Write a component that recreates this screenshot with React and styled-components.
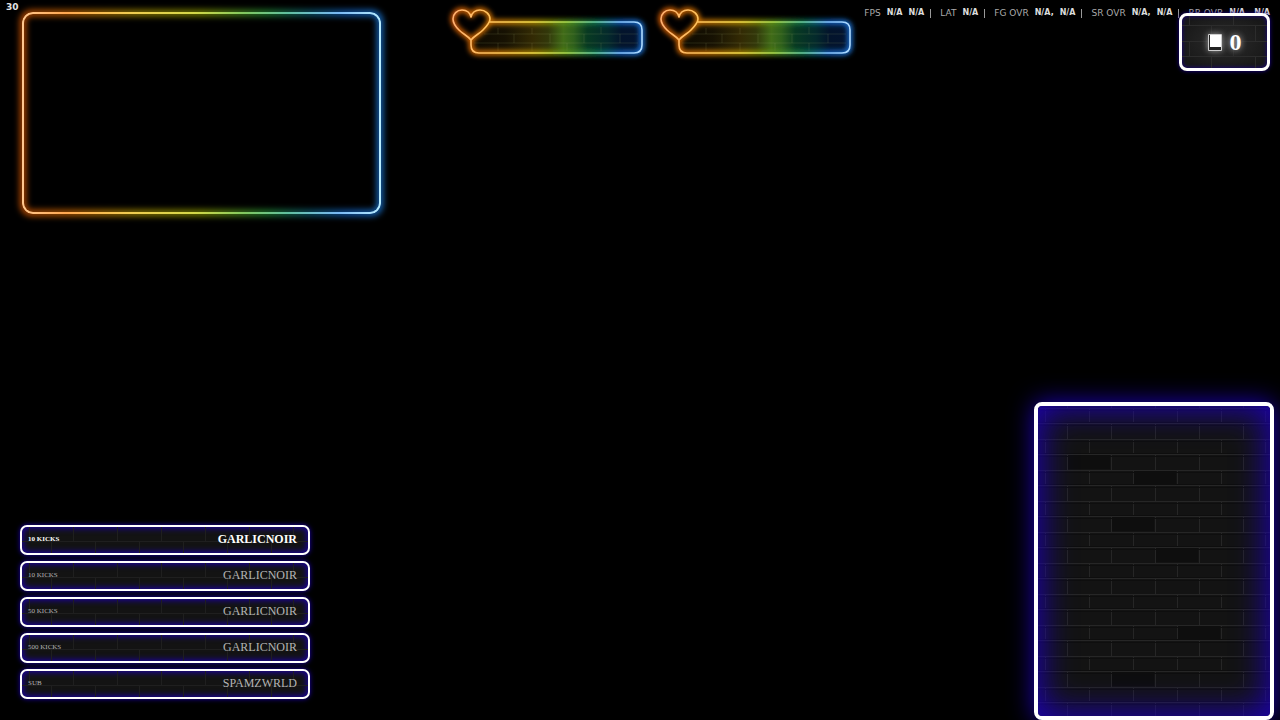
import { useId } from "react";
import styled, { createGlobalStyle, css } from "styled-components";

const stats = [
  { label: "FPS", values: ["N/A", "N/A"] },
  { label: "LAT", values: ["N/A"] },
  { label: "FG OVR", values: ["N/A,", "N/A"] },
  { label: "SR OVR", values: ["N/A,", "N/A"] },
  { label: "RR OVR", values: ["N/A,", "N/A"] },
];

const events = [
  { id: 1, type: "10 KICKS", user: "GARLICNOIR" },
  { id: 2, type: "10 KICKS", user: "GARLICNOIR" },
  { id: 3, type: "50 KICKS", user: "GARLICNOIR" },
  { id: 4, type: "500 KICKS", user: "GARLICNOIR" },
  { id: 5, type: "SUB", user: "SPAMZWRLD" },
];

// [column, row] of the darker bricks in the chat wall
const darkBricks = [
  [2, 3],
  [0, 2],
  [1, 6],
  [2, 8],
  [3, 13],
  [1, 16],
];

const HEART =
  "M19 31C16 27 11 25 7 21C3 17 1 14 1 10C1 5 5 1 10 1C15 1 18 4 19 8C20 4 23 1 28 1C33 1 38 5 38 10C38 14 35 17 31 21C27 25 22 27 19 31Z";
const BAR =
  "M37 13H182Q190 13 190 21V36Q190 44 182 44H27Q19 44 19 36V31C22 26 36 21 37 13Z";
const OUTLINE = `${HEART}M37 13H182Q190 13 190 21V36Q190 44 182 44H27Q19 44 19 36V31`;

const Bricks = ({
  offset = 0,
  line = "#262626",
  shade = "#0e0e0e",
  dark = [],
}) => {
  const id = useId();
  return (
    <BrickSvg aria-hidden="true">
      <defs>
        <pattern
          id={id}
          width="44"
          height="31"
          y={offset}
          patternUnits="userSpaceOnUse"
        >
          <path d="M0 .5H44M0 16.5H44M29.5 1V16M7.5 17V31" stroke={line} />
          <path d="M0 2.5H44M0 18.5H44M0 30.5H44" stroke={shade} />
        </pattern>
      </defs>
      {dark.map(([col, row]) => (
        <rect
          key={`${col}-${row}`}
          x={col * 44 + (row % 2 ? 7 : 29)}
          y={offset + Math.round(row * 15.5)}
          width="43"
          height="15"
          fill="#0e0e0e"
        />
      ))}
      <rect width="100%" height="100%" fill={`url(#${id})`} />
    </BrickSvg>
  );
};

const Goal = () => {
  const id = useId();
  return (
    <GoalSvg viewBox="0 0 192 46" aria-hidden="true">
      <defs>
        <linearGradient
          id={`${id}line`}
          gradientUnits="userSpaceOnUse"
          x1="0"
          x2="191"
          y1="0"
          y2="0"
        >
          <stop offset="0" stopColor="#ffb070" />
          <stop offset=".22" stopColor="#ffc45a" />
          <stop offset=".42" stopColor="#f0d848" />
          <stop offset=".6" stopColor="#a8d850" />
          <stop offset=".75" stopColor="#68c8a0" />
          <stop offset=".88" stopColor="#80c0ff" />
          <stop offset="1" stopColor="#b0dcff" />
        </linearGradient>
        <linearGradient
          id={`${id}glow`}
          gradientUnits="userSpaceOnUse"
          x1="0"
          x2="191"
          y1="0"
          y2="0"
        >
          <stop offset="0" stopColor="#e06008" />
          <stop offset=".25" stopColor="#d07800" />
          <stop offset=".45" stopColor="#a88c00" />
          <stop offset=".6" stopColor="#589018" />
          <stop offset=".75" stopColor="#107850" />
          <stop offset=".88" stopColor="#1060c0" />
          <stop offset="1" stopColor="#1c74d8" />
        </linearGradient>
        <linearGradient id={`${id}fill`}>
          <stop offset="0" stopColor="#0c0900" />
          <stop offset=".2" stopColor="#171203" />
          <stop offset=".36" stopColor="#332a04" />
          <stop offset=".45" stopColor="#32380a" />
          <stop offset=".54" stopColor="#416c18" />
          <stop offset=".6" stopColor="#2f601c" />
          <stop offset=".68" stopColor="#083a22" />
          <stop offset=".8" stopColor="#042a2c" />
          <stop offset=".88" stopColor="#03142c" />
          <stop offset="1" stopColor="#041430" />
        </linearGradient>
        <filter
          id={`${id}blur`}
          filterUnits="userSpaceOnUse"
          x="-20"
          y="-20"
          width="232"
          height="86"
        >
          <feGaussianBlur stdDeviation="2.5" />
        </filter>
      </defs>
      <path d={BAR} fill={`url(#${id}fill)`} />
      <path
        d="M32 25H186M22 34H186M46 19V25M80 19V25M149 18V25M62 25V34M98 25V34M132 25V34M46 34V42M80 34V42M115 34V42M149 34V42M168 25V34"
        stroke="#a8b070"
        strokeOpacity=".16"
        fill="none"
      />
      <path
        d={OUTLINE}
        fill="none"
        stroke={`url(#${id}glow)`}
        strokeWidth="5"
        filter={`url(#${id}blur)`}
      />
      <path
        d={OUTLINE}
        fill="none"
        stroke={`url(#${id}line)`}
        strokeWidth="1.6"
        strokeLinejoin="round"
      />
    </GoalSvg>
  );
};

const App = () => {
  return (
    <>
      <GlobalStyle />
      <Scene>
        <TopRow>
          <CameraColumn>
            <FrameRate>30</FrameRate>
            <Camera>
              <Glow>
                <Ring $glow />
              </Glow>
              <Ring />
            </Camera>
          </CameraColumn>
          <Goals>
            <Goal />
            <Goal />
          </Goals>
          <StatsColumn>
            <Stats>
              {stats.map((stat) => (
                <Stat key={stat.label}>
                  <StatLabel>{stat.label}</StatLabel>
                  {stat.values.map((value, i) => (
                    <StatValue key={i}>{value}</StatValue>
                  ))}
                </Stat>
              ))}
            </Stats>
            <Counter>
              <Bricks offset={9} line="#2c2c2c" shade="none" />
              <CounterIcon viewBox="0 0 14 17" aria-hidden="true">
                <path d="M.5 .5H13.5V16.5H.5Z" fill="#222" stroke="#ccc" />
                <path d="M2 1H13V13H2Z" fill="#fff" />
              </CounterIcon>
              <CounterValue>0</CounterValue>
            </Counter>
          </StatsColumn>
        </TopRow>
        <BottomRow>
          <Events>
            {events.map((event, i) => (
              <Event key={event.id} $latest={i === 0}>
                <Bricks offset={-17} line="#1f1f1f" shade="none" />
                <EventType>{event.type}</EventType>
                <EventUser>{event.user}</EventUser>
              </Event>
            ))}
          </Events>
          <Chat>
            <Bricks offset={17} dark={darkBricks} />
          </Chat>
        </BottomRow>
      </Scene>
    </>
  );
};

export default App;

const GlobalStyle = createGlobalStyle`
  * {
    box-sizing: border-box;
  }
  body {
    margin: 0;
    background: #000;
    color: #fff;
    font-family: "Liberation Serif", serif;
  }
`;

const Scene = styled.main`
  display: flex;
  flex-direction: column;
  justify-content: space-between;
  min-height: 100vh;
  overflow: hidden;
`;

const TopRow = styled.div`
  display: flex;
  align-items: flex-start;
`;

const CameraColumn = styled.div`
  flex: 0 1 381px;
`;

const FrameRate = styled.div`
  height: 12px;
  padding-left: 6px;
  font: bold 9px/14px "DejaVu Sans", sans-serif;
  color: #e4e4e4;
`;

const Camera = styled.div`
  position: relative;
  aspect-ratio: 16 / 9;
  margin-left: 22px;
`;

const Glow = styled.div`
  position: absolute;
  inset: 0;
  filter: blur(3px);
`;

/* a gradient background masked down to its own padding */
const Ring = styled.div`
  position: absolute;
  inset: ${({ $glow }) => ($glow ? "-2px" : "0")};
  padding: ${({ $glow }) => ($glow ? "6px" : "2px")};
  border-radius: 11px;
  background: ${({ $glow }) =>
    $glow
      ? "linear-gradient(90deg, #c04c00, #b86000 15%, #988000 32%, #7c8800 50%, #208030 68%, #0c5870 80%, #1058b0 90%, #1870c8)"
      : "linear-gradient(90deg, #ffc890, #ffa850 12%, #f0cc50 30%, #d4d848 48%, #80c860 62%, #60c0a0 74%, #78b8f4 88%, #b8ecff)"};
  mask:
    linear-gradient(#000 0 0) content-box exclude,
    linear-gradient(#000 0 0);
`;

const Goals = styled.div`
  display: flex;
  flex: 0 1 400px;
  gap: 16px;
  margin: 9px 0 0 71px;
`;

const GoalSvg = styled.svg`
  flex: 1;
  min-width: 0;
  overflow: visible;
`;

const StatsColumn = styled.div`
  display: flex;
  flex-direction: column;
  align-items: flex-end;
  margin-left: auto;
  padding: 6px 10px 0 0;
`;

const Stats = styled.div`
  display: flex;
  font: 9px/14px "DejaVu Sans", sans-serif;
  white-space: nowrap;
`;

const Stat = styled.div`
  display: flex;
  align-items: center;
  gap: 6px;
  & + &::before {
    content: "";
    width: 1px;
    height: 9px;
    margin: 0 3px 0 6px;
    background: #999;
  }
`;

const StatLabel = styled.span`
  color: #aaa;
`;

const StatValue = styled.b`
  font-size: 8px;
  color: #ddd;
`;

const wall = css`
  position: relative;
  border: solid #fff;
  background: #131313;
`;

const BrickSvg = styled.svg`
  position: absolute;
  inset: 0;
  width: 100%;
  height: 100%;
  z-index: -1;
`;

const Counter = styled.div`
  ${wall}
  z-index: 1;
  display: flex;
  align-items: center;
  justify-content: center;
  gap: 8px;
  width: 91px;
  height: 58px;
  margin-top: -7px;
  border-width: 3px;
  border-radius: 8px;
  background: radial-gradient(#2c2c2c, #181818 80%);
  box-shadow:
    0 0 4px #1a0090,
    inset 0 0 4px #1a0090;
`;

const CounterIcon = styled.svg`
  width: 14px;
  height: 17px;
  filter: drop-shadow(0 0 3px #fff8);
`;

const CounterValue = styled.span`
  font-size: 24px;
  font-weight: bold;
  line-height: 28px;
  text-shadow: 0 0 6px #fffa;
`;

const BottomRow = styled.div`
  display: flex;
  align-items: flex-end;
  justify-content: space-between;
  padding: 0 6px 0 20px;
`;

const Events = styled.ul`
  display: flex;
  flex-direction: column;
  flex: 0 1 290px;
  gap: 6px;
  margin: 0;
  padding: 0 0 21px;
  list-style: none;
`;

const Event = styled.li`
  ${wall}
  z-index: 0;
  display: flex;
  align-items: center;
  justify-content: space-between;
  height: 30px;
  padding: 0 11px 2px 6px;
  border-width: 2px;
  border-radius: 7px;
  color: ${({ $latest }) => ($latest ? "#fff" : "#b4b4b4")};
  font-weight: ${({ $latest }) => ($latest ? "bold" : "normal")};
  box-shadow:
    0 0 5px #1c00b0,
    inset 0 0 6px 1px #1c00b0;
`;

const EventType = styled.span`
  font-size: 7px;
`;

const EventUser = styled.span`
  font-size: 12px;
`;

const Chat = styled.section`
  ${wall}
  z-index: 0;
  flex: 0 1 240px;
  height: 318px;
  border-width: 4px;
  border-radius: 8px;
  box-shadow: 0 0 24px #1c00b8;
  &::after {
    content: "";
    position: absolute;
    inset: 0;
    border-radius: 4px;
    box-shadow: inset 0 0 32px 4px #1c00b0;
  }
`;
